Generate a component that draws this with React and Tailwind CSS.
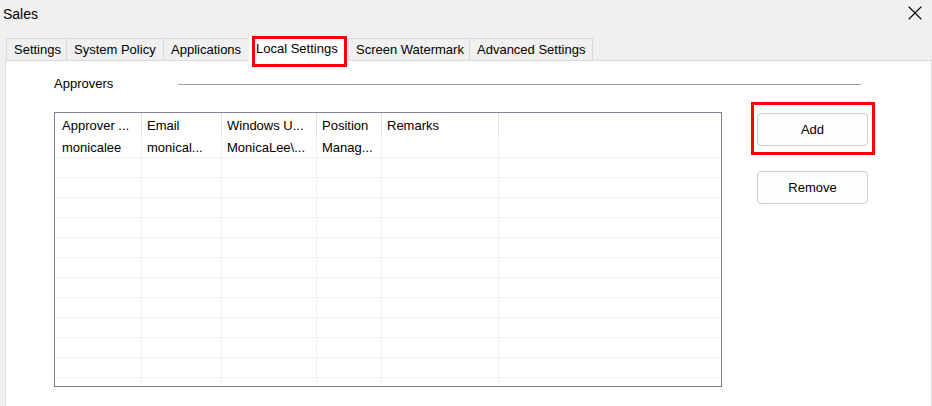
import { X } from "lucide-react";

const tabs = [
  { label: "Settings", w: "w-[60px]" },
  { label: "System Policy", w: "w-[97px]" },
  { label: "Applications", w: "w-[86px]" },
  { label: "Local Settings", w: "w-[99px]", active: true },
  { label: "Screen Watermark", w: "w-[121px]" },
  { label: "Advanced Settings", w: "w-[124px]" },
];

const columns = [
  { label: "Approver ...", w: "w-[87px]", pl: "pl-[7px]" },
  { label: "Email", w: "w-[80px]", pl: "pl-[5px]" },
  { label: "Windows U...", w: "w-[95px]", pl: "pl-[5px]" },
  { label: "Position", w: "w-[65px]", pl: "pl-[5px]" },
  { label: "Remarks", w: "w-[117px]", pl: "pl-[5px]" },
];

const rows = [["monicalee", "monical...", "MonicaLee\\...", "Manag...", ""]];
for (let i = 0; i < 12; i++) rows.push(["", "", "", "", ""]);

function Tab({ label, w, active }) {
  if (active) {
    return (
      <div className={`${w} relative h-[25px] -mb-px bg-white z-10 flex items-start pt-[3px] pl-[7px]`}>
        {label}
        {/* annotation box */}
        <div className="absolute left-[3px] top-0 w-[95px] h-[31px] border-[3px] border-[#ff0000]" />
      </div>
    );
  }
  return (
    <div className={`${w} h-[22px] bg-[#f0f0f0] border-l border-t border-[#d9d9d9] last:border-r flex items-center pl-[7px]`}>
      {label}
    </div>
  );
}

export default function App() {
  return (
    <div
      className="w-[932px] h-[406px] overflow-hidden bg-[#f0f0f0] flex flex-col text-[13px] text-black"
      style={{ fontFamily: '"Liberation Sans", Arial, sans-serif' }}
    >
      {/* Title bar */}
      <div className="h-[38px] flex items-start justify-between">
        <span className="ml-[3px] mt-[5px] leading-[18px] text-[14px]">Sales</span>
        <X className="w-[24px] h-[24px] mr-[5px] mt-px" strokeWidth={1.1} />
      </div>

      {/* Tabs */}
      <div className="h-[22px] flex items-end pl-[6px]">
        {tabs.map((t) => (
          <Tab key={t.label} {...t} />
        ))}
      </div>

      {/* Panel */}
      <div className="flex-1 -mb-[4px] ml-[5px] w-[927px] bg-white border border-[#dadada] pl-[48px] pt-[15px]">
        <div className="w-[807px] flex items-center h-[16px]">
          <span className="w-[124px] leading-[16px]">Approvers</span>
          <div className="flex-1 h-px bg-[#a0a0a0]" />
        </div>

        <div className="flex mt-[20px]">
          {/* Table */}
          <div className="w-[668px] h-[275px] border border-[#828090] overflow-hidden">
            <div className="flex h-[25px]">
              {columns.map((c) => (
                <div key={c.label} className={`${c.w} ${c.pl} border-r border-[#e3e3e3] flex items-center`}>
                  {c.label}
                </div>
              ))}
              <div className="flex-1" />
            </div>
            {rows.map((r, i) => (
              <div key={i} className="flex h-[20px] border-b border-[#f0f0f0]">
                {columns.map((c, j) => (
                  <div key={j} className={`${c.w} ${c.pl} border-r border-[#f0f0f0] flex items-center`}>
                    {r[j]}
                  </div>
                ))}
                <div className="flex-1" />
              </div>
            ))}
          </div>

          {/* Buttons */}
          <div className="ml-[35px] pt-px flex flex-col">
            <div className="relative">
              <button className="w-[111px] h-[33px] bg-[#fdfdfd] border border-[#cccccc] rounded-[4px]">Add</button>
              <div className="absolute -left-[6px] -top-[11px] w-[124px] h-[53px] border-[3px] border-[#ff0000]" />
            </div>
            <button className="mt-[25px] w-[111px] h-[33px] bg-[#fdfdfd] border border-[#cccccc] rounded-[4px]">Remove</button>
          </div>
        </div>
      </div>
    </div>
  );
}
